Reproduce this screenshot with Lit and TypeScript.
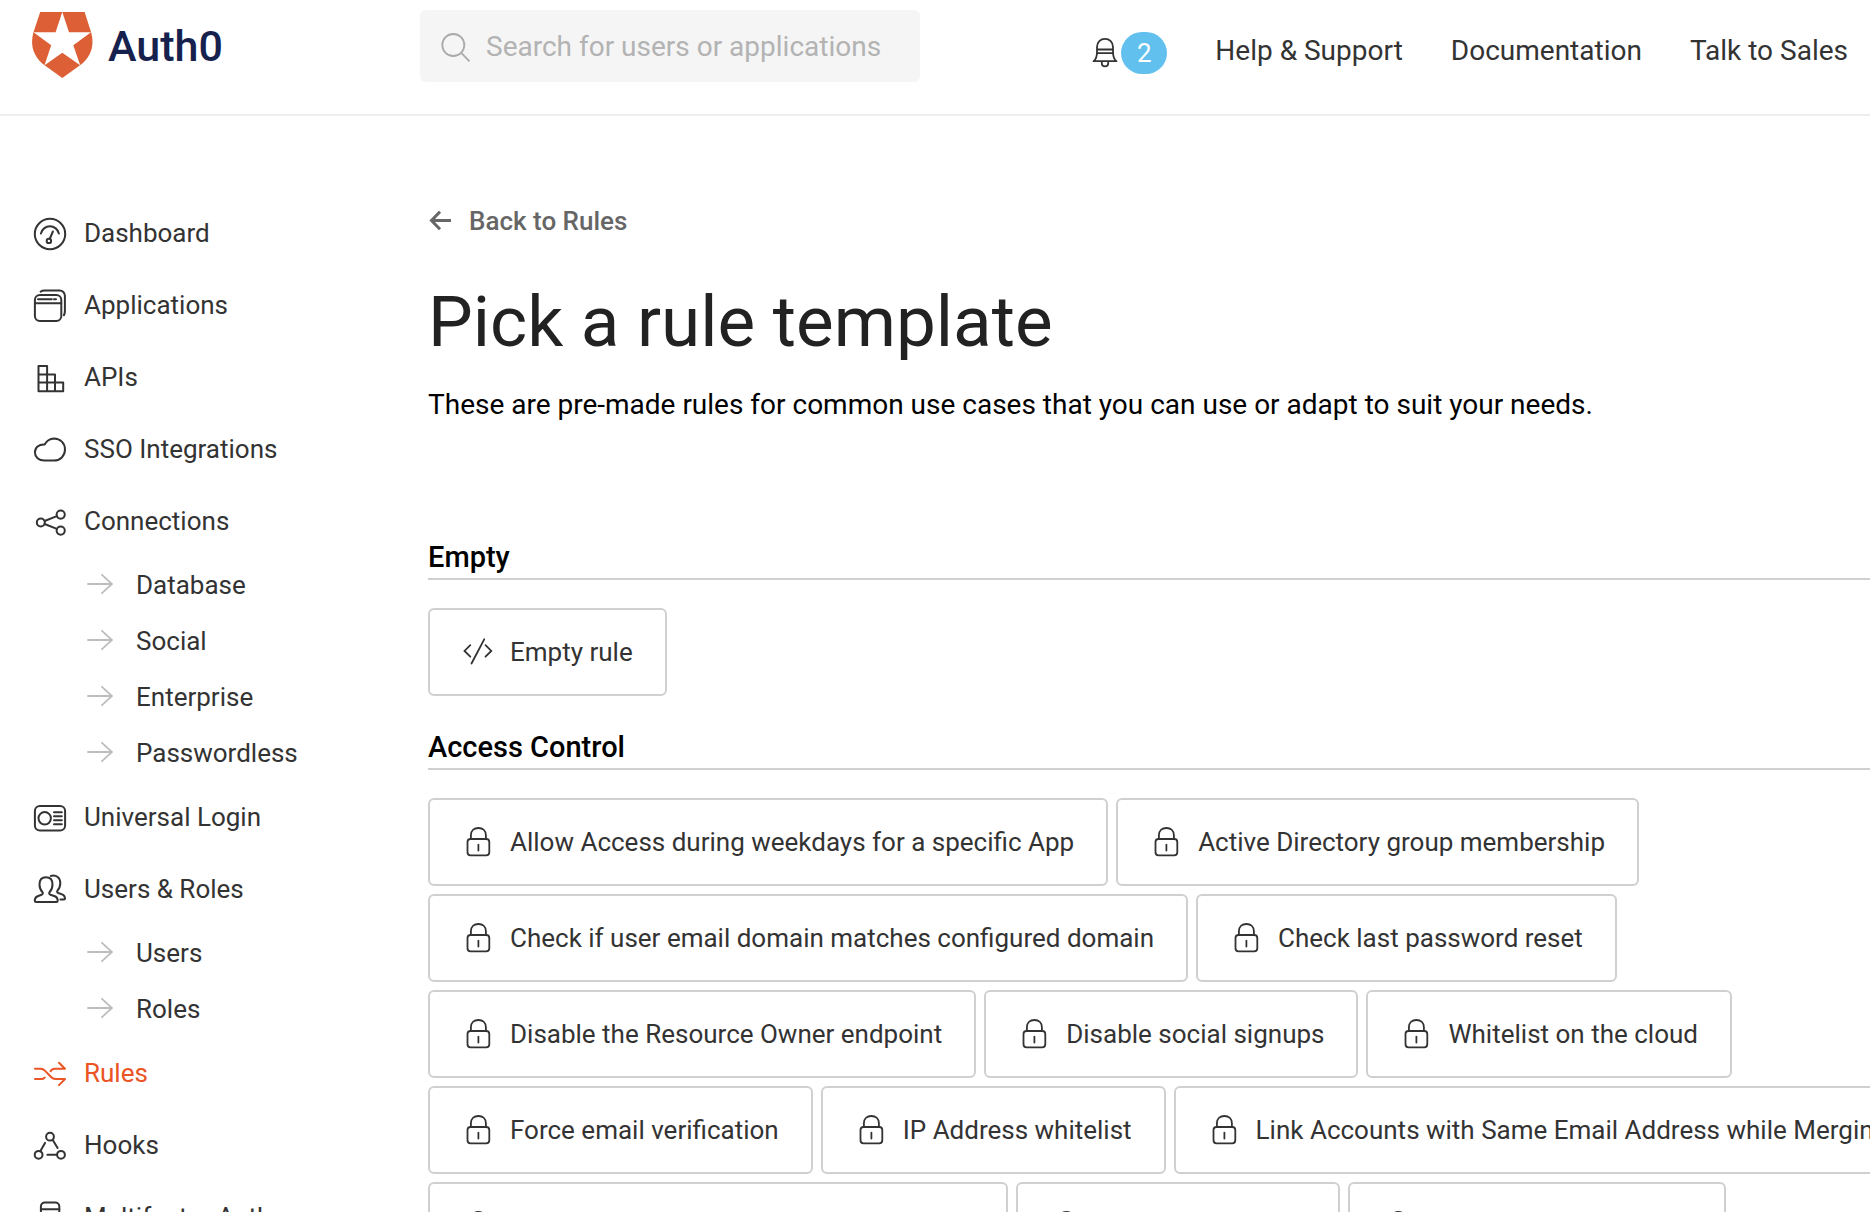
import { LitElement, html, css, svg, nothing } from "lit";
import { customElement, property } from "lit/decorators.js";

const icons: Record<string, unknown> = {
  dashboard: svg`<circle cx="17" cy="17" r="15.2"/><path d="M7.9 16.6a9.2 9.2 0 0 1 18 0M19.9 14.5l-3 7"/><circle cx="15.9" cy="23.9" r="2.2"/>`,
  applications: svg`<rect x="1.9" y="6" width="26.4" height="26" rx="5"/><path d="M2 14.200h26.2M5 10.2h13.8M21 10.2h2M7.6 2.7C8.8 1.7 10 1.500 11.5 1.500H26.5a5.2 5.2 0 0 1 5.4 5.2V22c0 2-.3 3-1 4.200"/>`,
  apis: svg`<path d="M5.500 5h8.600v25.200M5.500 5v25.200h24.700v-8.600H5.500M5.500 13.500h16.500v16.700"/>`,
  cloud: svg`<path d="M11.600 11.500A11.400 11.400 0 0 1 21 5.400c6.300 0 11 4.800 11 11.200 0 6.200-4.800 11-11 11H11.300C5.800 27.600 1.900 24 1.900 19.300c0-4.800 4-8.200 9.700-7.800z"/>`,
  connections: svg`<circle cx="7.800" cy="17.500" r="4"/><circle cx="27.700" cy="9.600" r="4.100"/><circle cx="27.700" cy="25.600" r="4.100"/><path d="M11.600 16l12.300-4.900M11.600 19l12.300 4.900"/>`,
  login: svg`<rect x="1.900" y="5" width="30.200" height="24.600" rx="5"/><circle cx="11.700" cy="17.300" r="6.200"/><path d="M21 11.300h7.800M21 15.300h7.800M21 19.300h7.800M21 23.300h7.800"/>`,
  users: svg`<g transform="translate(0 1)"><path d="M13 3.200c4.300 0 6.500 3 6.500 7.300 0 3-1 5.700-3 7.700-.7.900-.3 2.100 1 2.600l4.300 1.500c2 .800 2.900 1.900 2.900 4.200 0 1-.5 1.500-1.500 1.500H3.300c-1 0-1.500-.5-1.500-1.500 0-2.300.9-3.400 2.900-4.200L8.500 20.800c1.300-.5 1.700-1.700 1-2.600-2-2-3-4.700-3-7.700 0-4.300 2.200-7.300 6.500-7.300z"/><path d="M17.800 1.900c5.800-1.300 9.500 2 9.500 7.200 0 3-1 5.600-2.800 7.400-.8 1-.4 2 .8 2.500l3.800 1.400c2 .800 2.900 2 2.900 4.200 0 .7-.4 1-1 1h-3.600"/></g>`,
  rules: svg`<path d="M2 11.700h5.600c2 0 3 .4 4.300 1.900l6.200 6.400c1.500 1.600 2.400 2.100 4.300 2.100H32l-6 6M2 22.100h6.200c1.600 0 2.700-.5 3.500-1.500M17.500 14.200c1-1.700 2.500-2.500 4.500-2.500h10l-6-6"/>`,
  hooks: svg`<circle cx="17" cy="7.700" r="3.900"/><circle cx="5.600" cy="25.800" r="3.900"/><circle cx="28" cy="25.800" r="3.900"/><path d="M19.600 10.800l5 8.200M12 13.900l-4.700 8.400M14.400 25.800h9.500"/>`,
  device: svg`<rect x="7.900" y="1.600" width="18.400" height="29" rx="4"/><path d="M7.900 8.300h18.400M7.900 25h18.400"/>`,
};

@customElement("ui-icon")
class UiIcon extends LitElement {
  @property() name = "";

  static styles = css`
    :host { display: block; flex: none; width: 34px; height: 34px; }
    svg { display: block; width: 100%; height: 100%; overflow: visible; }
  `;

  render() {
    return html`<svg viewBox="0 -1 34 34" fill="none" stroke="currentColor" stroke-width="2"
      stroke-linecap="round" stroke-linejoin="round" aria-hidden="true">${icons[this.name]}</svg>`;
  }
}

interface NavEntry { label: string; icon: string; active?: boolean; children?: string[] }

const navigation: NavEntry[] = [
  { label: "Dashboard", icon: "dashboard" },
  { label: "Applications", icon: "applications" },
  { label: "APIs", icon: "apis" },
  { label: "SSO Integrations", icon: "cloud" },
  { label: "Connections", icon: "connections", children: ["Database", "Social", "Enterprise", "Passwordless"] },
  { label: "Universal Login", icon: "login" },
  { label: "Users & Roles", icon: "users", children: ["Users", "Roles"] },
  { label: "Rules", icon: "rules", active: true },
  { label: "Hooks", icon: "hooks" },
  { label: "Multifactor Auth", icon: "device" },
];

@customElement("side-nav")
class SideNav extends LitElement {
  static styles = css`
    :host { display: block; }
    ul { margin: 0; padding: 0; list-style: none; }
    a { display: flex; align-items: center; color: #333; text-decoration: none; white-space: nowrap; }
    .item { height: 72px; gap: 17px; }
    .item.active { color: #eb5424; }
    .sub { height: 56px; gap: 23px; padding-left: 54px; }
    .arrow { flex: none; width: 26px; height: 22px; fill: none; stroke: #bdbdbd; stroke-width: 1.800; stroke-linecap: round; }
  `;

  render() {
    return html`<nav aria-label="Main"><ul>
      ${navigation.map((entry) => html`<li>
        <a class="item ${entry.active ? "active" : ""}" href="#" aria-current=${entry.active ? "page" : nothing}>
          <ui-icon name=${entry.icon}></ui-icon>${entry.label}
        </a>
        ${entry.children
          ? html`<ul>${entry.children.map((label) => html`<li>
              <a class="sub" href="#">
                <svg class="arrow" viewBox="0 0 26 22" aria-hidden="true"><path d="M1 10h24M15 .8L25 10l-10 9.200"/></svg>${label}
              </a></li>`)}</ul>`
          : nothing}
      </li>`)}
    </ul></nav>`;
  }
}

@customElement("top-bar")
class TopBar extends LitElement {
  static styles = css`
    :host { display: flex; height: 114px; border-bottom: 2px solid #eee; padding: 0 22px 0 32px; }
    a { color: #333; text-decoration: none; white-space: nowrap; }
    .brand { display: flex; align-items: flex-start; gap: 14px; flex: none; width: 388px; padding-top: 12px; }
    .shield { width: 62px; height: 66px; }
    .word { font-size: 43px; font-weight: 500; line-height: 68px; color: #16214d; }
    .search { display: flex; align-items: center; gap: 15px; flex: 0 1 500px; max-width: 500px; height: 72px; margin-top: 10px; padding: 2px 20px 0; box-sizing: border-box; border-radius: 6px; background: #f5f5f5; }
    .glass { flex: none; width: 31px; height: 30px; fill: none; stroke: #aaa; stroke-width: 1.800; }
    input { flex: 1; min-width: 0; border: 0; padding: 0; outline: 0; background: none; font: inherit; font-size: 28px; color: #333; }
    input::placeholder { color: #b3b3b3; opacity: 1; }
    .links { display: flex; align-items: center; gap: 48px; height: 102px; margin-left: auto; font-size: 28px; }
    .alerts { display: flex; align-items: center; gap: 3px; border: 0; padding: 4px 0 0; background: none; font: inherit; font-size: 26px; color: #333; }
    .bell { width: 26px; height: 30px; fill: none; stroke: currentColor; stroke-width: 1.800; stroke-linejoin: round; }
    .badge { width: 46px; height: 42px; border-radius: 21px; background: #62c0ef; color: #fff; line-height: 42px; text-align: center; }
  `;

  render() {
    return html`
      <a class="brand" href="#">
        <svg class="shield" viewBox="0 0 62 66" aria-hidden="true">
          <path fill="#dc5f36" d="M8.200 0H52.600L59.200 20.500C62.700 33 59.300 45 48 53.300L30.300 66 12.600 53.300C1.300 45-2.100 33 1.400 20.500z"/>
          <path fill="#fff" d="M30.300 0l6.700 20.300h22L41.300 33.200 48.200 53.300 30.300 40.800 12.500 53.300 19.200 33.200 1.500 20.300h22.100z"/>
        </svg>
        <span class="word">Auth0</span>
      </a>
      <label class="search">
        <svg class="glass" viewBox="0 0 31 30" aria-hidden="true"><circle cx="13.300" cy="13" r="11"/><path d="M21 20.600l8.500 8.700"/></svg>
        <input type="text" aria-label="Search" placeholder="Search for users or applications" />
      </label>
      <nav class="links" aria-label="Account">
        <button class="alerts" aria-label="Notifications, 2 unread">
          <svg class="bell" viewBox="0 0 26 30" aria-hidden="true">
            <path d="M1.500 23.200c2.500-1.500 3.500-5 3.500-9.700V9C5 4 8.500 .9 13 .9s8 3.100 8 8.100v4.500c0 4.700 1 8.200 3.500 9.700zM5 11.500h16M5 15.200h16M9.800 23.200v2a3.200 3.200 0 0 0 6.400 0v-2"/>
          </svg>
          <span class="badge">2</span>
        </button>
        <a href="#">Help &amp; Support</a>
        <a href="#">Documentation</a>
        <a href="#">Talk to Sales</a>
      </nav>`;
  }
}

const accessControl: string[][] = [
  ["Allow Access during weekdays for a specific App", "Active Directory group membership"],
  ["Check if user email domain matches configured domain", "Check last password reset"],
  ["Disable the Resource Owner endpoint", "Disable social signups", "Whitelist on the cloud"],
  ["Force email verification", "IP Address whitelist", "Link Accounts with Same Email Address while Merging Metadata"],
  ["Link Accounts with Same Email Address", "Set roles to a user", "Email domain whitelist"],
];

const codeGlyph = svg`<path d="M8.300 9.200L2.500 14.900l5.800 5.800M23.500 9.200l5.800 5.700-5.800 5.800M22.200 3.300L9.500 27.500"/>`;
const lockGlyph = svg`<rect x="5.500" y="13" width="21.800" height="16.300" rx="3"/><path d="M8.900 13V9.300C8.900 4.600 12 2 16.400 2s7.500 2.600 7.500 7.300V13M16.400 18.600v6"/>`;

@customElement("template-picker")
class TemplatePicker extends LitElement {
  static styles = css`
    :host { display: block; min-width: 0; }
    .back { display: flex; align-items: center; gap: 17px; height: 40px; margin-top: 85px; font-weight: 500; color: #666; text-decoration: none; }
    .back svg { width: 24px; height: 20px; fill: none; stroke: currentColor; stroke-width: 3; }
    h1 { margin: 40px 0 0; font-size: 71px; font-weight: 400; line-height: 82px; color: #222; }
    .intro { margin: 22px 0 0; font-size: 28px; line-height: 40px; color: #000; }
    h2 { margin: 31px 0 28px; padding-bottom: 1px; border-bottom: 2px solid #d0d0d0; font-size: 29px; font-weight: 500; line-height: 40px; color: #000; }
    .first { margin-top: 112px; }
    .rows { display: flex; flex-direction: column; gap: 8px; }
    .row { display: flex; gap: 8px; }
    .template { display: flex; flex: none; align-items: center; gap: 16px; height: 88px; box-sizing: border-box; padding: 0 32px; border: 2px solid #d0d0d0; border-radius: 6px; background: #fff; font: inherit; color: #333; white-space: nowrap; }
    .template svg { width: 32px; height: 32px; fill: none; stroke: currentColor; stroke-width: 1.800; stroke-linecap: round; }
  `;

  private template(label: string, glyph: unknown) {
    return html`<button class="template"><svg viewBox="0 0 32 32" aria-hidden="true">${glyph}</svg>${label}</button>`;
  }

  render() {
    return html`
      <a class="back" href="#"><svg viewBox="0 0 24 20" aria-hidden="true"><path d="M23 9.500H3M12 .7L3.500 9.500l8.500 8.800"/></svg>Back to Rules</a>
      <h1>Pick a rule template</h1>
      <p class="intro">These are pre-made rules for common use cases that you can use or adapt to suit your needs.</p>
      <section>
        <h2 class="first">Empty</h2>
        <div class="row">${this.template("Empty rule", codeGlyph)}</div>
      </section>
      <section>
        <h2>Access Control</h2>
        <div class="rows">
          ${accessControl.map((row) => html`<div class="row">${row.map((label) => this.template(label, lockGlyph))}</div>`)}
        </div>
      </section>`;
  }
}

@customElement("app-root")
class AppRoot extends LitElement {
  static styles = css`
    :host { display: block; height: 100vh; overflow: hidden; background: #fff; color: #333; font: 400 26px/32px Roboto, "Liberation Sans", sans-serif; }
    .body { display: grid; grid-template-columns: 395px minmax(0, 1fr); padding-left: 33px; }
    .side { padding-top: 81px; }
    main { min-width: 0; }
  `;

  render() {
    return html`
      <top-bar></top-bar>
      <div class="body">
        <side-nav class="side"></side-nav>
        <main><template-picker></template-picker></main>
      </div>`;
  }
}
